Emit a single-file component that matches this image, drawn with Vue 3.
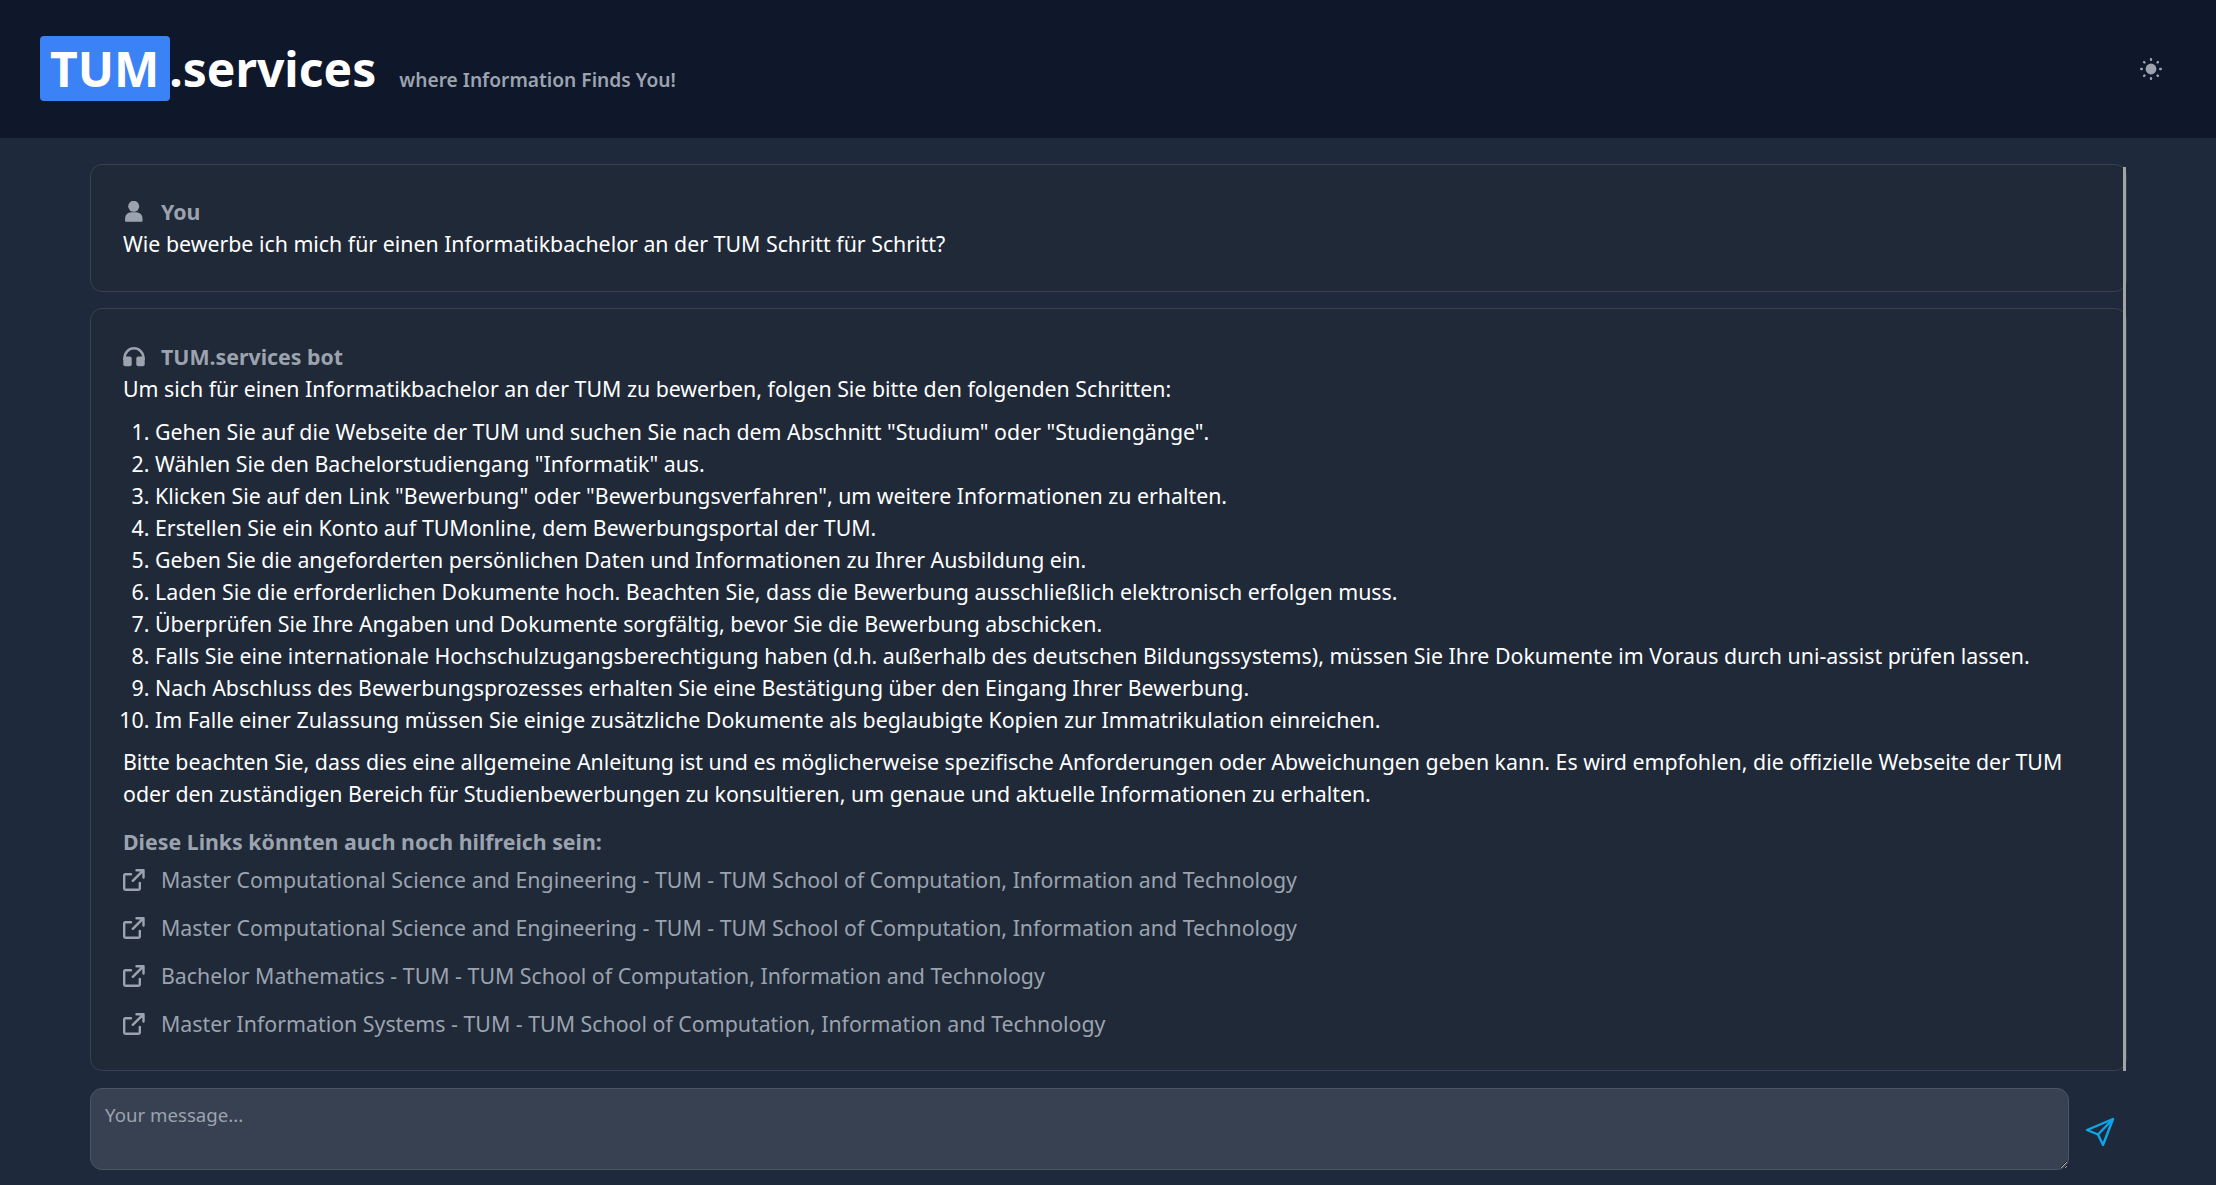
<template>
  <div class="page">
    <header class="topbar">
      <div class="brand">
        <span class="brand__tum">TUM</span><span class="brand__rest">.services</span>
        <span class="brand__tag">where Information Finds You!</span>
      </div>
      <button class="theme-btn" title="Toggle theme">
        <svg viewBox="0 0 22 22" width="22" height="22" fill="#9ca3af" stroke="#9ca3af">
          <circle cx="11" cy="11" r="5.4" stroke="none" />
          <g stroke-width="2.4" stroke-linecap="round">
            <path d="M11 1.2v.6M11 20.2v.6M1.2 11h.6M20.2 11h.6M4.1 4.1l.4.4M17.5 17.5l.4.4M4.1 17.9l.4-.4M17.5 4.5l.4-.4" />
          </g>
        </svg>
      </button>
    </header>

    <main class="chat">
      <div class="chat__scroll">
        <section class="msg msg--user">
          <div class="msg__who">
            <svg class="msg__icon" viewBox="0 0 22 22" fill="#9ca3af">
              <circle cx="10.7" cy="5.3" r="5.5" />
              <path d="M2.9 20.8a.8.8 0 0 1-.8-.8v-2.7a6 6 0 0 1 6-6h5.4a6 6 0 0 1 6 6V20a.8.8 0 0 1-.8.8z" />
            </svg>
            You
          </div>
          <p class="msg__text">Wie bewerbe ich mich für einen Informatikbachelor an der TUM Schritt für Schritt?</p>
        </section>

        <section class="msg">
          <div class="msg__who">
            <svg class="msg__icon" viewBox="0 0 22 22" fill="none">
              <path d="M1.6 14v-2.3a9.4 9.4 0 0 1 18.8 0V14" stroke="#9ca3af" stroke-width="2.6" />
              <rect x=".3" y="10.5" width="8.4" height="9.8" rx="2" fill="#9ca3af" />
              <rect x="13.3" y="10.5" width="8.4" height="9.8" rx="2" fill="#9ca3af" />
            </svg>
            TUM.services bot
          </div>
          <p class="msg__text">Um sich für einen Informatikbachelor an der TUM zu bewerben, folgen Sie bitte den folgenden Schritten:</p>
          <ol class="msg__steps">
            <li v-for="step in steps" :key="step">{{ step }}</li>
          </ol>
          <p class="msg__text msg__text--closing">Bitte beachten Sie, dass dies eine allgemeine Anleitung ist und es möglicherweise spezifische Anforderungen oder Abweichungen geben kann. Es wird empfohlen, die offizielle Webseite der TUM oder den zuständigen Bereich für Studienbewerbungen zu konsultieren, um genaue und aktuelle Informationen zu erhalten.</p>

          <h3 class="links__title">Diese Links könnten auch noch hilfreich sein:</h3>
          <a v-for="(link, i) in links" :key="i" class="links__item" href="#">
            <svg class="msg__icon" viewBox="0 0 22 22" fill="none" stroke="#9ca3af" stroke-width="2.4" stroke-linecap="round" stroke-linejoin="round">
              <path d="M8 5.2H2.4a1.2 1.2 0 0 0-1.2 1.2v13.2a1.2 1.2 0 0 0 1.2 1.2h13.2a1.2 1.2 0 0 0 1.2-1.2V14" />
              <path d="M13.5 1.2h7v7.3M20.5 1.2L9.8 11.8" />
            </svg>
            {{ link }}
          </a>
        </section>
        <div class="chat__thumb"></div>
      </div>

      <form class="composer" @submit.prevent>
        <textarea class="composer__input" placeholder="Your message..."></textarea>
        <button class="composer__send" type="submit" title="Send">
          <svg viewBox="0 0 30 30" width="30" height="30" fill="none" stroke="#0ea5e9" stroke-width="2.4" stroke-linecap="round" stroke-linejoin="round">
            <path d="M2 13L28 2l-10 26-5-10.5z" />
            <path d="M28 2L13 17.5" />
          </svg>
        </button>
      </form>
    </main>
  </div>
</template>

<script setup>
const steps = [
  'Gehen Sie auf die Webseite der TUM und suchen Sie nach dem Abschnitt "Studium" oder "Studiengänge".',
  'Wählen Sie den Bachelorstudiengang "Informatik" aus.',
  'Klicken Sie auf den Link "Bewerbung" oder "Bewerbungsverfahren", um weitere Informationen zu erhalten.',
  'Erstellen Sie ein Konto auf TUMonline, dem Bewerbungsportal der TUM.',
  'Geben Sie die angeforderten persönlichen Daten und Informationen zu Ihrer Ausbildung ein.',
  'Laden Sie die erforderlichen Dokumente hoch. Beachten Sie, dass die Bewerbung ausschließlich elektronisch erfolgen muss.',
  'Überprüfen Sie Ihre Angaben und Dokumente sorgfältig, bevor Sie die Bewerbung abschicken.',
  'Falls Sie eine internationale Hochschulzugangsberechtigung haben (d.h. außerhalb des deutschen Bildungssystems), müssen Sie Ihre Dokumente im Voraus durch uni-assist prüfen lassen.',
  'Nach Abschluss des Bewerbungsprozesses erhalten Sie eine Bestätigung über den Eingang Ihrer Bewerbung.',
  'Im Falle einer Zulassung müssen Sie einige zusätzliche Dokumente als beglaubigte Kopien zur Immatrikulation einreichen.',
]

const links = [
  'Master Computational Science and Engineering - TUM - TUM School of Computation, Information and Technology',
  'Master Computational Science and Engineering - TUM - TUM School of Computation, Information and Technology',
  'Bachelor Mathematics - TUM - TUM School of Computation, Information and Technology',
  'Master Information Systems - TUM - TUM School of Computation, Information and Technology',
]
</script>

<style>
html, body {
  margin: 0;
  background: #1e293b;
}
</style>

<style scoped>
.page {
  height: 1185px;
  overflow: hidden;
  display: flex;
  flex-direction: column;
  font-family: "Noto Sans", sans-serif;
  font-size: 21.33px;
  line-height: 32px;
  color: #fff;
  background: #1e293b;
}

.topbar {
  height: 138px;
  flex: none;
  box-sizing: border-box;
  padding: 0 54px 0 40px;
  display: flex;
  align-items: center;
  justify-content: space-between;
  background: #0f172a;
}

.brand {
  display: flex;
  align-items: baseline;
  padding-top: 9px;
  font-weight: 700;
  font-size: 48px;
  line-height: 65px;
}
.brand__tum {
  padding: 0 11px 0 10px;
  margin-right: -1px;
  border-radius: 4px;
  background: #3b82f6;
}
.brand__tag {
  margin-left: 23px;
  font-size: 19.2px;
  font-weight: 600;
  color: #9ca3af;
}

.theme-btn {
  padding: 0;
  border: 0;
  background: none;
  display: flex;
}

.chat {
  flex: 1;
  padding: 26px 89px 15px 90px;
  display: flex;
  flex-direction: column;
  gap: 17px;
}
.chat__scroll {
  position: relative;
  display: flex;
  flex-direction: column;
  gap: 16px;
}
.chat__thumb {
  position: absolute;
  top: 3px;
  bottom: 0;
  right: 1px;
  width: 3px;
  background: #a3a3a3;
}

.msg {
  box-sizing: border-box;
  padding: 32px 32px 30px;
  border: 1px solid #374151;
  border-radius: 12px;
  background: #1f2937;
}
.msg--user {
  padding-top: 31px;
  padding-bottom: 31px;
}
.msg__who {
  display: flex;
  align-items: center;
  gap: 16px;
  font-weight: 700;
  color: #9ca3af;
}
.msg__icon {
  width: 22px;
  height: 22px;
  flex: none;
}
.msg__text {
  margin: 0;
}
.msg__steps {
  margin: 11px 0 10px;
  padding-left: 32px;
}
.links__title {
  margin: 16px 0 6px;
  font-size: 21.33px;
  font-weight: 700;
  color: #9ca3af;
}
.links__item {
  display: flex;
  align-items: center;
  gap: 16px;
  color: #9ca3af;
  text-decoration: none;
  margin-bottom: 16px;
}
.links__item:last-child {
  margin-bottom: 0;
}

.composer {
  display: flex;
  align-items: center;
  gap: 16px;
}
.composer__input {
  flex: 1;
  height: 82px;
  box-sizing: border-box;
  padding: 14px;
  border: 1px solid #4b5563;
  border-radius: 12px;
  background: #374151;
  color: #fff;
  font: 18.67px/24px "Noto Sans", sans-serif;
  outline: none;
}
.composer__input::placeholder {
  color: #9ca3af;
}
.composer__send {
  padding: 0;
  border: 0;
  background: none;
  display: flex;
  margin-right: 12px;
  margin-top: 6px;
}
</style>
